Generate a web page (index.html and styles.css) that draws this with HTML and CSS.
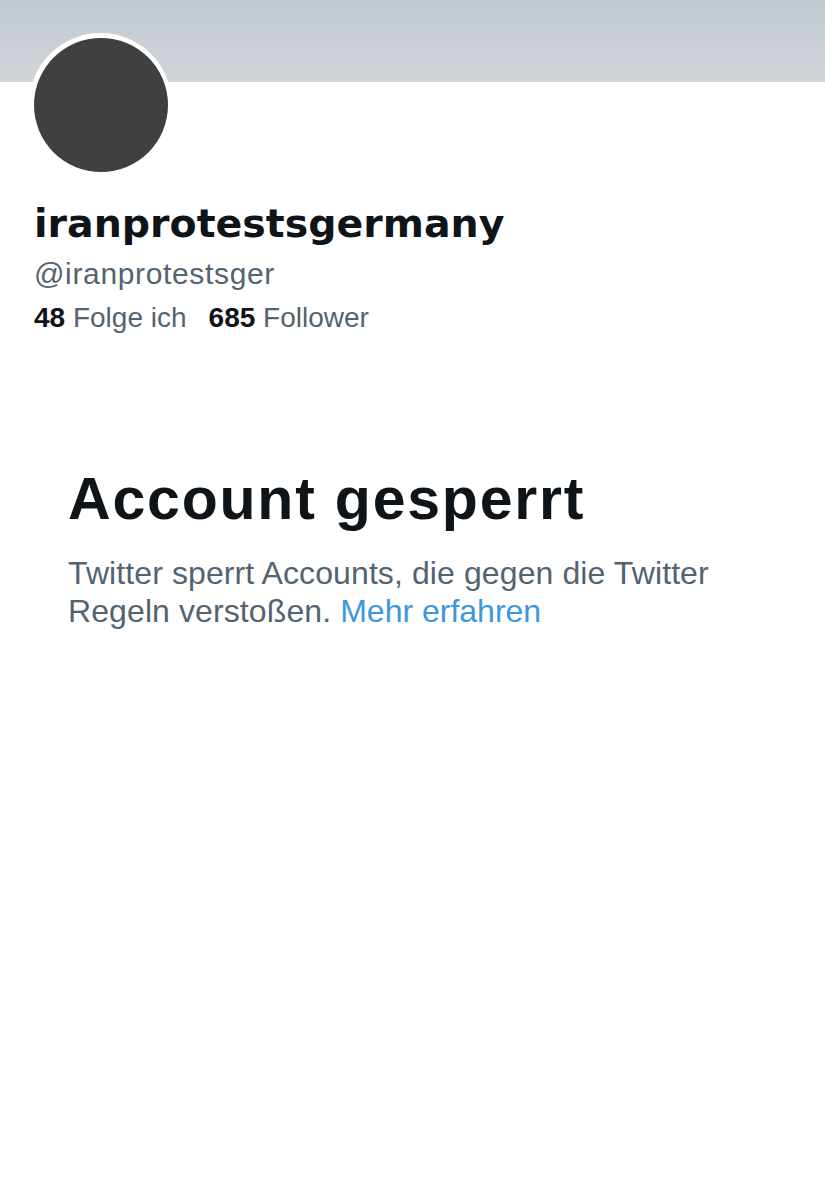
FILE: index.html
```html
<!DOCTYPE html>
<html lang="de">
<head>
<meta charset="utf-8">
<link rel="stylesheet" href="styles.css">
</head>
<body>
<div class="page">
  <div class="banner"></div>
  <div class="profile">
    <div class="avatar-wrap"><div class="avatar"></div></div>
    <h1 class="name">iranprotestsgermany</h1>
    <div class="handle">@iranprotestsger</div>
    <div class="stats">
      <span class="stat"><b>48</b> Folge ich</span>
      <span class="stat"><b>685</b> Follower</span>
    </div>
  </div>
  <div class="notice">
    <h2 class="notice-title">Account gesperrt</h2>
    <p class="notice-text">Twitter sperrt Accounts, die gegen die Twitter Regeln verstoßen. <a class="link" href="#">Mehr erfahren</a></p>
  </div>
</div>
</body>
</html>
```

FILE: styles.css
```css
html, body {
  margin: 0;
  padding: 0;
  background: #ffffff;
}
body {
  font-family: "Liberation Sans", Arial, sans-serif;
  color: #0f1419;
}
.page {
  width: 825px;
  min-height: 1200px;
  background: #fff;
}
.banner {
  height: 82px;
  background: linear-gradient(180deg, #c2c9cf 0%, #d0d6da 100%);
}
.profile {
  padding: 0 34px;
}
.avatar-wrap {
  width: 143px;
  height: 143px;
  border-radius: 50%;
  background: #fff;
  margin: -49px 0 0 -5px;
  display: flex;
  align-items: center;
  justify-content: center;
}
.avatar {
  width: 134px;
  height: 134px;
  border-radius: 50%;
  background: #404040;
}
.name {
  margin: 23px 0 0 0;
  font-family: "DejaVu Sans", sans-serif;
  font-size: 39.5px;
  line-height: 48px;
  font-weight: 700;
  color: #0f1419;
}
.handle {
  margin-top: 9px;
  font-size: 30px;
  line-height: 36px;
  letter-spacing: 0.65px;
  color: #536471;
}
.stats {
  margin-top: 9px;
  display: flex;
  gap: 22px;
  font-size: 28px;
  line-height: 34px;
  color: #536471;
}
.stat b {
  color: #0f1419;
  font-weight: 700;
}
.notice {
  padding: 130px 68px 0 68px;
}
.notice-title {
  margin: 0;
  font-size: 59px;
  line-height: 68px;
  font-weight: 700;
  letter-spacing: 1.8px;
  color: #0f1419;
}
.notice-text {
  margin: 21px 0 0 0;
  font-size: 32px;
  line-height: 38px;
  letter-spacing: 0.1px;
  color: #536471;
}
.link {
  color: #3e97dd;
  text-decoration: none;
  letter-spacing: 0;
}
```
